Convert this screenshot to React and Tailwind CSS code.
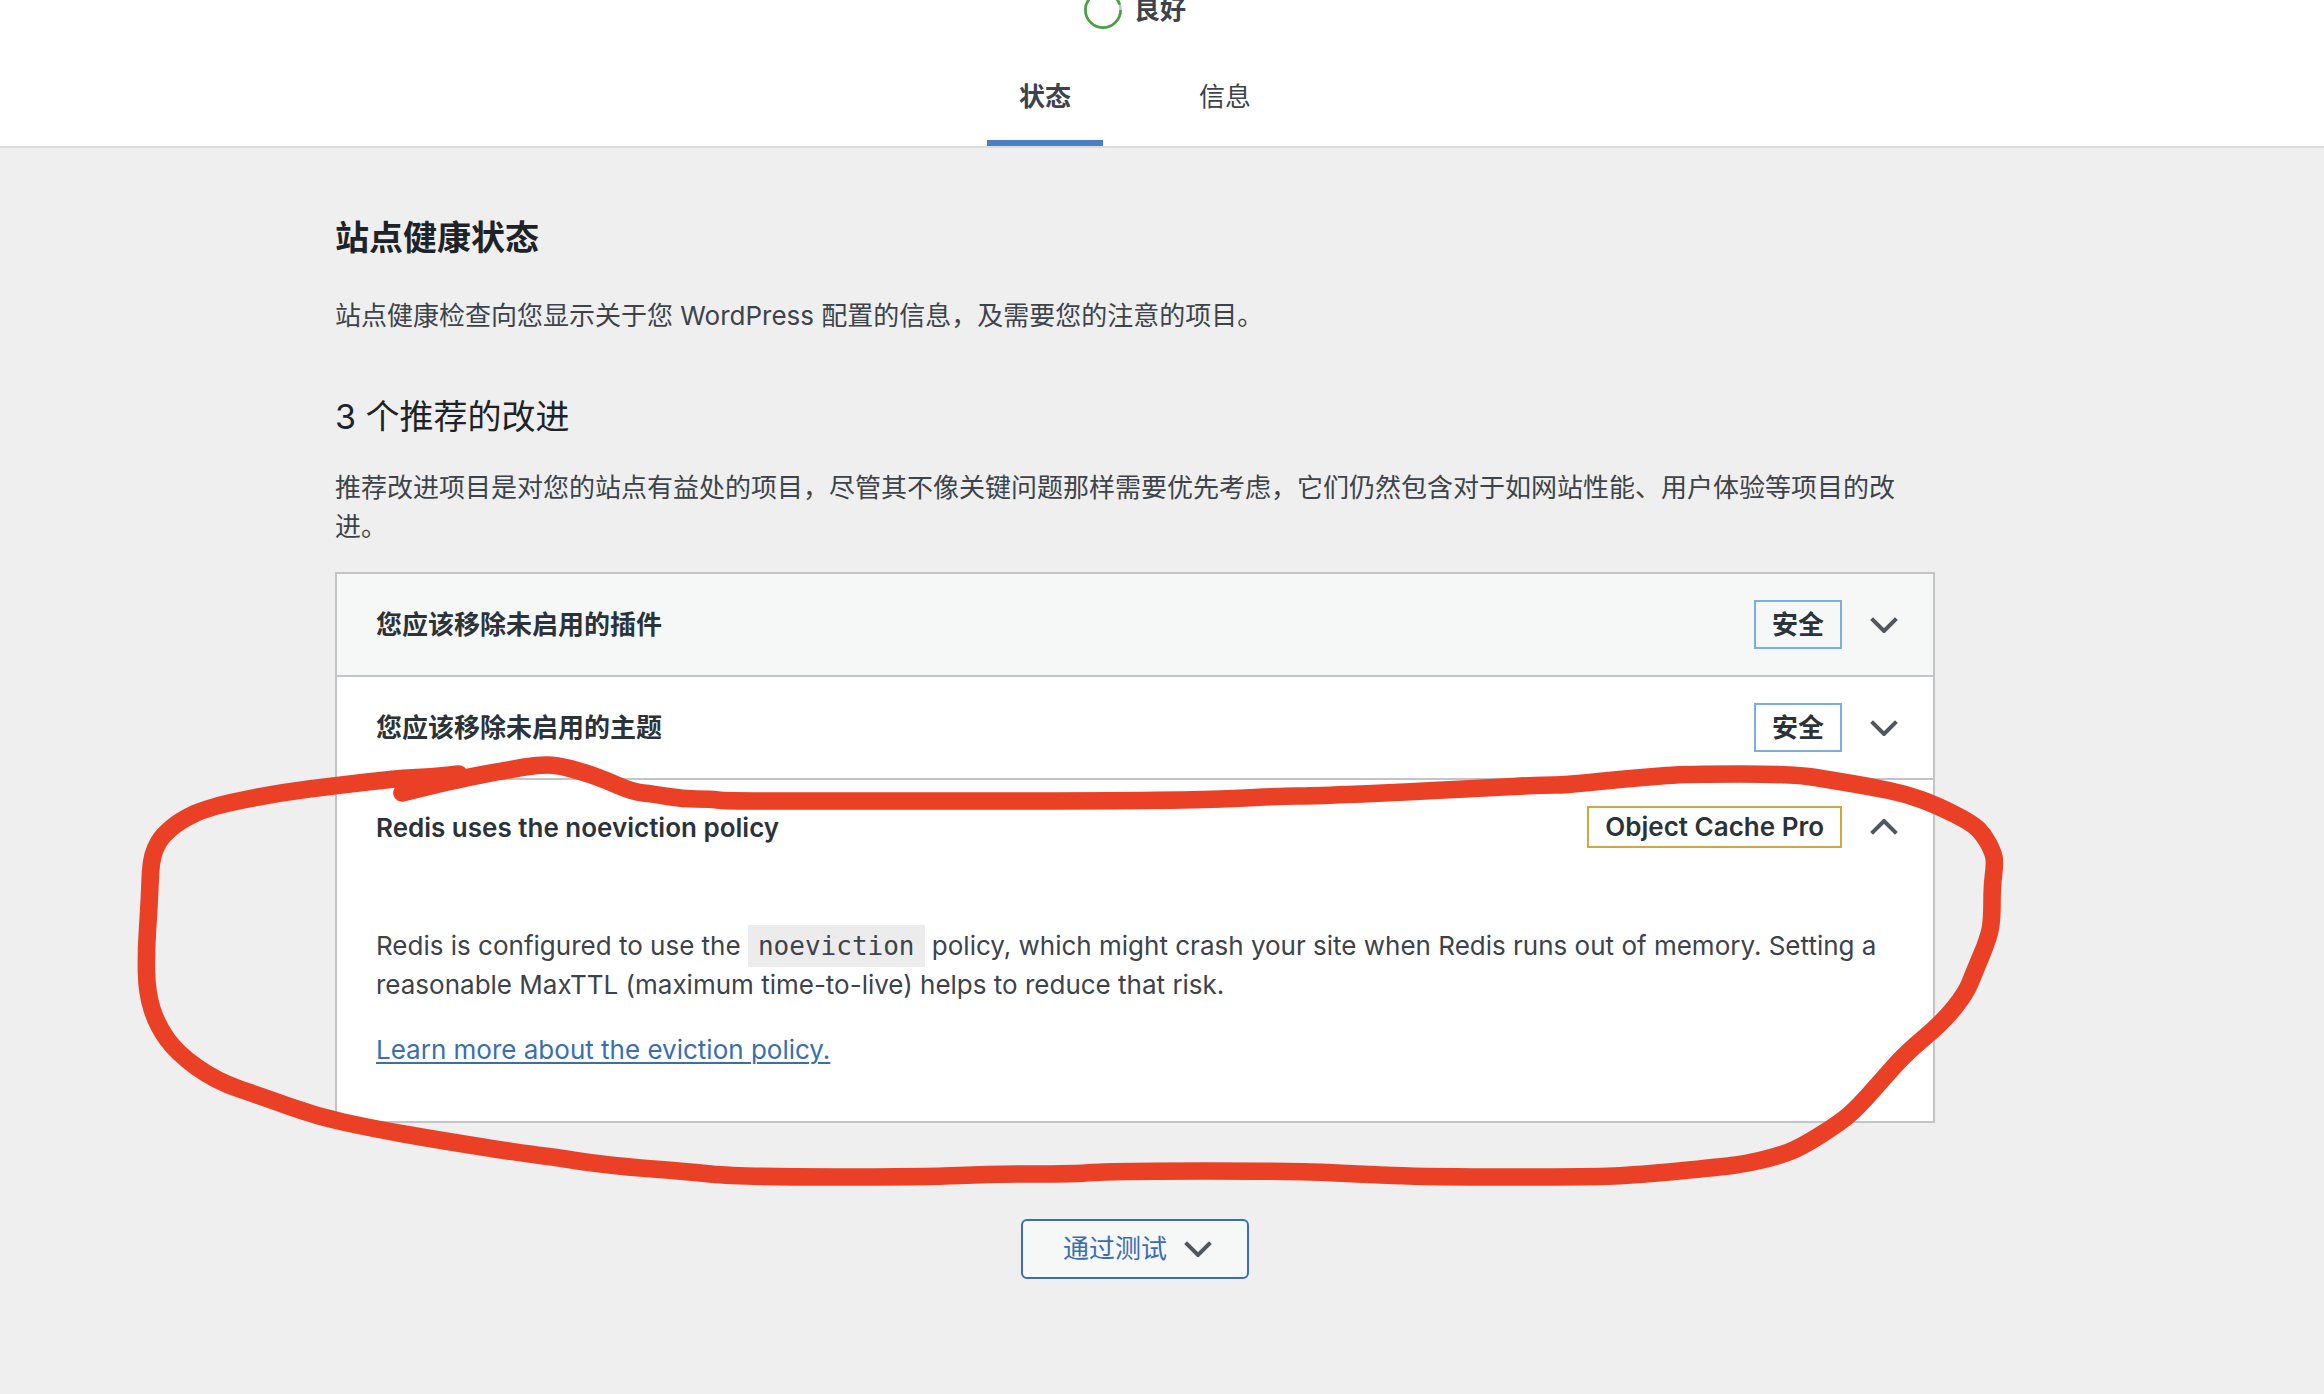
import { useState } from "react";
import clsx from "clsx";

// freehand marker drawn over the open item
const MARKER = [
  [402, 793], [453, 780], [513, 769], [537, 765], [557, 765], [583, 772], [603, 779], [633, 792],
  [653, 794], [683, 799], [710, 799], [725, 801], [800, 801], [1186, 801], [1282, 796], [1310, 796],
  [1386, 793], [1482, 788], [1545, 785], [1565, 785], [1614, 780], [1648, 777], [1686, 774], [1794, 774],
  [1837, 781], [1872, 787], [1906, 794], [1936, 805], [1972, 823], [1984, 835], [1993, 852], [1995, 863],
  [1992, 887], [1992, 918], [1989, 937], [1974, 973], [1966, 993], [1943, 1022], [1906, 1053], [1882, 1080],
  [1858, 1107], [1841, 1122], [1800, 1148], [1775, 1157], [1744, 1164], [1720, 1167], [1638, 1175], [1590, 1177],
  [1430, 1177], [1356, 1174], [1297, 1171], [1114, 1171], [1074, 1174], [993, 1174], [926, 1177], [741, 1177],
  [680, 1171], [627, 1167], [584, 1162], [554, 1157], [527, 1154], [438, 1140], [370, 1128], [316, 1116],
  [263, 1097], [216, 1081], [177, 1053], [157, 1025], [147, 993], [146, 953], [149, 907], [150, 883],
  [151, 863], [155, 848], [163, 835], [181, 820], [209, 807], [277, 793], [341, 785], [402, 778],
  [431, 777], [459, 774],
];

const smoothPath = (points) => {
  let d = `M${points[0].join(" ")}`;
  for (let i = 1; i < points.length - 1; i++) {
    const [x, y] = points[i];
    const [nx, ny] = points[i + 1];
    d += ` Q${x} ${y} ${(x + nx) / 2} ${(y + ny) / 2}`;
  }
  return d + ` L${points[points.length - 1].join(" ")}`;
};

const items = [
  { id: "plugins", title: "您应该移除未启用的插件", badge: "安全", color: "blue" },
  { id: "themes", title: "您应该移除未启用的主题", badge: "安全", color: "blue" },
  { id: "redis", title: "Redis uses the noeviction policy", badge: "Object Cache Pro", color: "orange" },
];

function Chevron({ up }) {
  return (
    <svg
      className={clsx("h-4 w-7 shrink-0", up && "rotate-180")}
      viewBox="0 0 28 16"
      fill="none"
      stroke="#50575e"
      strokeWidth="4"
      aria-hidden="true"
    >
      <path d="M1.6 1.6 14 14 26.4 1.6" />
    </svg>
  );
}

function HealthItem({ item, open, onToggle, shaded, children }) {
  return (
    <div className="border-b-2 border-[#c3c4c7] last:border-b-0">
      <h4>
        <button
          type="button"
          aria-expanded={open}
          onClick={onToggle}
          className={clsx(
            "flex w-full items-center py-[26px] pr-[35px] pl-[39px] text-left font-semibold text-[#2c3338]",
            shaded ? "bg-[#f6f7f7]" : "bg-white"
          )}
        >
          <span className="flex-1">{item.title}</span>
          <span
            className={clsx(
              "mr-7 border-2 px-4 py-[3px]",
              item.color === "orange" ? "border-[#d3a73c] leading-8" : "border-[#7bade3]"
            )}
          >
            {item.badge}
          </span>
          <Chevron up={open} />
        </button>
      </h4>
      {open && children}
    </div>
  );
}

function App() {
  const [tab, setTab] = useState("status");
  const [openId, setOpenId] = useState("redis");

  return (
    <div className="min-h-screen overflow-hidden bg-[#efefef] font-['Inter','Noto_Sans_CJK_SC',sans-serif] text-[26px] leading-[39px] text-[#3c434a]">
      <header className="border-b-2 border-[#dcdcde] bg-white pr-[54px]">
        <div className="-mt-[9px] flex items-center justify-center gap-3">
          <svg className="size-[38px]" viewBox="0 0 38 38" fill="none" strokeWidth="2.6" aria-hidden="true">
            <circle cx="19" cy="19" r="17.6" stroke="#c3c4c7" />
            <circle cx="19" cy="19" r="17.6" stroke="#4aa03f" pathLength="100" strokeDasharray="95 5" />
          </svg>
          <span className="font-semibold leading-[38px]">良好</span>
        </div>

        <nav className="mt-6 flex justify-center gap-16">
          <button
            type="button"
            onClick={() => setTab("status")}
            className={clsx(
              "border-b-6 px-8 py-6",
              tab === "status" ? "border-[#4a7fc1] font-semibold" : "border-transparent"
            )}
          >
            状态
          </button>
          <button
            type="button"
            onClick={() => setTab("info")}
            className={clsx(
              "border-b-6 px-8 py-6",
              tab === "info" ? "border-[#4a7fc1] font-semibold" : "border-transparent"
            )}
          >
            信息
          </button>
        </nav>
      </header>

      <main className="pr-[54px]">
        <div className="mx-auto max-w-[1600px] pt-16 pb-24">
          <h2 className="text-[34px] leading-[52px] font-semibold text-[#1d2327]">站点健康状态</h2>
          <p className="mt-8">站点健康检查向您显示关于您 WordPress 配置的信息，及需要您的注意的项目。</p>

          <h3 className="mt-14 text-[34px] leading-[52px] text-[#1d2327]">3 个推荐的改进</h3>
          <p className="mt-[25px]">
            推荐改进项目是对您的站点有益处的项目，尽管其不像关键问题那样需要优先考虑，它们仍然包含对于如网站性能、用户体验等项目的改进。
          </p>

          <div className="relative mt-[26px]">
            <div className="border-2 border-[#c3c4c7] bg-white">
              {items.map((item, i) => (
                <HealthItem
                  key={item.id}
                  item={item}
                  shaded={i === 0}
                  open={openId === item.id}
                  onToggle={() => setOpenId(openId === item.id ? null : item.id)}
                >
                  <div className="px-[39px] py-[52px]">
                    <p>
                      Redis is configured to use the{" "}
                      <code className="bg-[#ececec] px-2.5 py-1.5 font-['DejaVu_Sans_Mono',monospace] text-[26px] leading-none">
                        noeviction
                      </code>{" "}
                      policy, which might crash your site when Redis runs out of memory. Setting a reasonable
                      MaxTTL (maximum time-to-live) helps to reduce that risk.
                    </p>
                    <p className="mt-[26px]">
                      <a href="#eviction-policy" className="text-[#3a6eb0] underline decoration-2 underline-offset-3">
                        Learn more about the eviction policy.
                      </a>
                    </p>
                  </div>
                </HealthItem>
              ))}
            </div>

            <svg
              className="pointer-events-none absolute top-[178px] left-[-205px] h-[450px] w-[1890px] max-w-none"
              viewBox="130 750 1890 450"
              fill="none"
              stroke="#ea4025"
              strokeWidth="17.6"
              strokeLinecap="round"
              strokeLinejoin="round"
              aria-hidden="true"
            >
              <path d={smoothPath(MARKER)} />
            </svg>
          </div>

          <div className="mt-24 flex justify-center">
            <button
              type="button"
              className="flex items-center gap-[17px] rounded-md border-2 border-[#3a6eb0] bg-[#f6f7f7] py-2 pr-[35px] pl-10 leading-10 text-[#3a6eb0]"
            >
              通过测试
              <Chevron />
            </button>
          </div>
        </div>
      </main>
    </div>
  );
}

export default App;
